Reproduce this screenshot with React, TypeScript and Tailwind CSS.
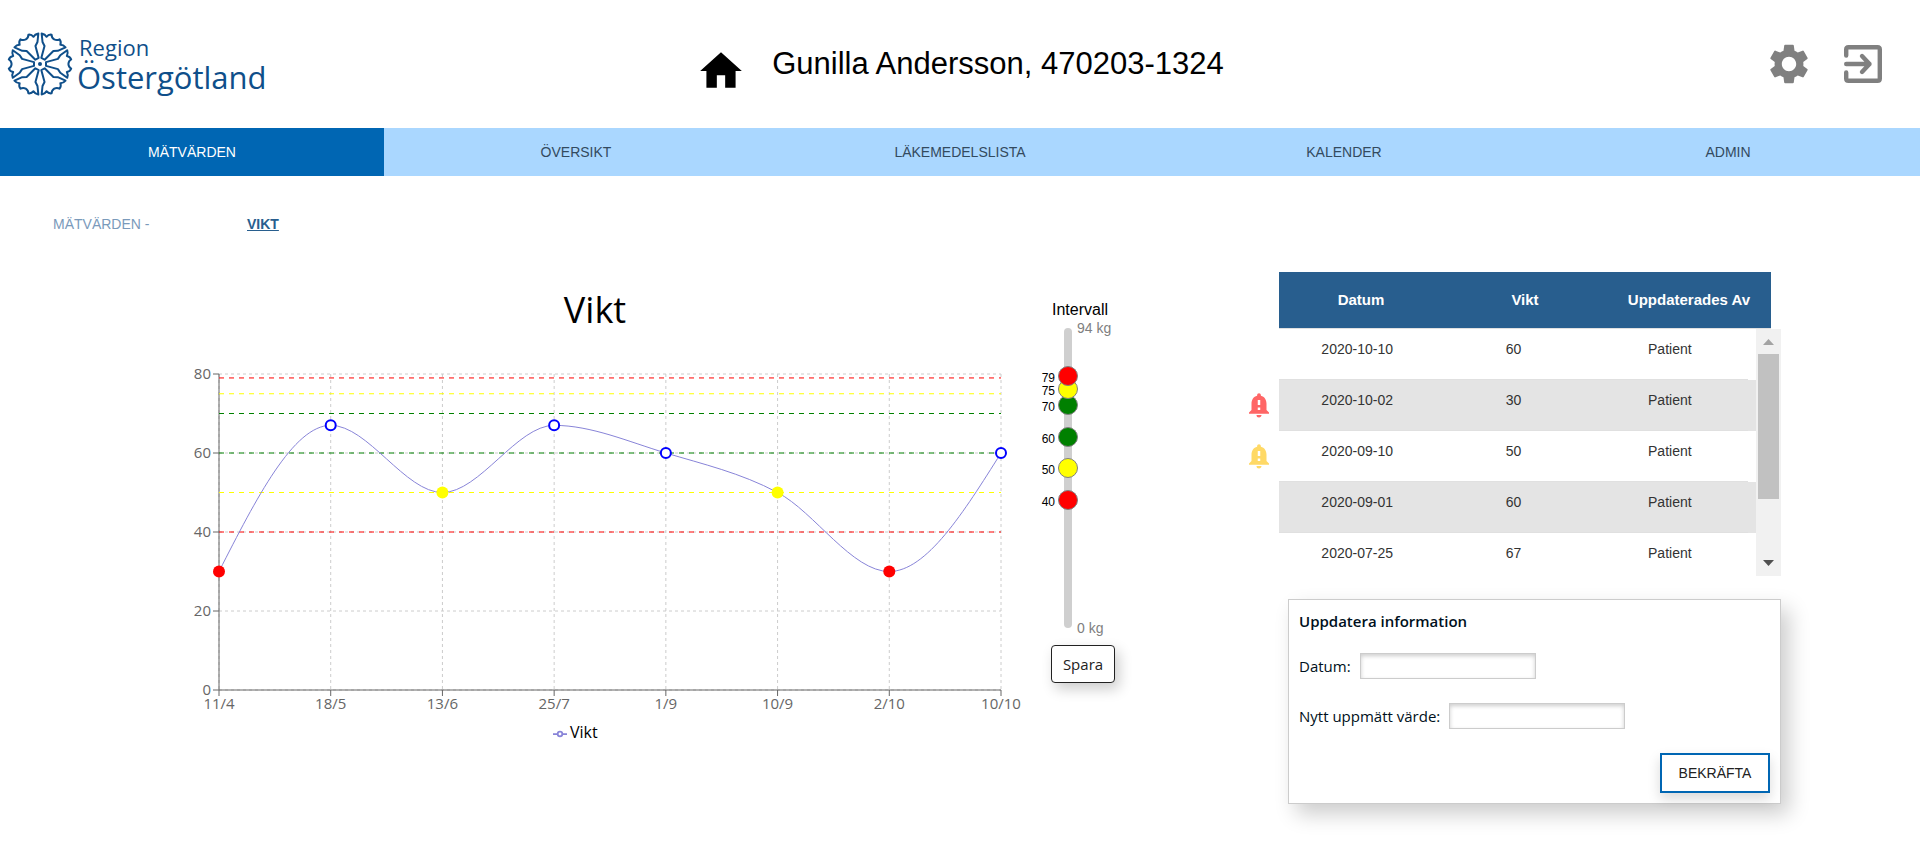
import React from "react";
import { MdHome, MdSettings, MdNotificationImportant } from "react-icons/md";

const tabs = ["MÄTVÄRDEN", "ÖVERSIKT", "LÄKEMEDELSLISTA", "KALENDER", "ADMIN"];

const measurements = [
  { day: "11/4", value: 30 },
  { day: "18/5", value: 67 },
  { day: "13/6", value: 50 },
  { day: "25/7", value: 67 },
  { day: "1/9", value: 60 },
  { day: "10/9", value: 50 },
  { day: "2/10", value: 30 },
  { day: "10/10", value: 60 },
];

const limits = [
  { value: 40, color: "red", thumb: "[&::-webkit-slider-thumb]:bg-[#ff0000]" },
  { value: 50, color: "yellow", thumb: "[&::-webkit-slider-thumb]:bg-[#ffff00]" },
  { value: 60, color: "green", thumb: "[&::-webkit-slider-thumb]:bg-[#008000]" },
  { value: 70, color: "green", thumb: "[&::-webkit-slider-thumb]:bg-[#008000]" },
  { value: 75, color: "yellow", thumb: "[&::-webkit-slider-thumb]:bg-[#ffff00]" },
  { value: 79, color: "red", thumb: "[&::-webkit-slider-thumb]:bg-[#ff0000]" },
];

const rows = [
  { date: "2020-10-10", value: 60, by: "Patient", alert: "" },
  { date: "2020-10-02", value: 30, by: "Patient", alert: "text-[#ff6666]" },
  { date: "2020-09-10", value: 50, by: "Patient", alert: "text-[#ffd966]" },
  { date: "2020-09-01", value: 60, by: "Patient", alert: "" },
  { date: "2020-07-25", value: 67, by: "Patient", alert: "" },
];

const LEFT = 219;
const RIGHT = 1001;
const TOP = 24;
const BOTTOM = 340;
const step = (RIGHT - LEFT) / (measurements.length - 1);
const px = (i: number) => LEFT + i * step;
const py = (v: number) => BOTTOM - (v / 80) * (BOTTOM - TOP);

/** Monotone cubic interpolation through the measured points. */
function curve(points: [number, number][]) {
  const n = points.length;
  const slope = (i: number) =>
    (points[i + 1][1] - points[i][1]) / (points[i + 1][0] - points[i][0]);
  const m: number[] = new Array(n).fill(0);
  for (let i = 1; i < n - 1; i++) {
    const a = slope(i - 1);
    const b = slope(i);
    m[i] = (Math.sign(a) + Math.sign(b)) * Math.min(Math.abs(a), Math.abs(b), Math.abs(a + b) / 4);
  }
  m[0] = (3 * slope(0) - m[1]) / 2;
  m[n - 1] = (3 * slope(n - 2) - m[n - 2]) / 2;
  let d = `M${points[0][0]},${points[0][1]}`;
  for (let i = 0; i < n - 1; i++) {
    const [x0, y0] = points[i];
    const [x1, y1] = points[i + 1];
    const h = (x1 - x0) / 3;
    d += `C${x0 + h},${y0 + m[i] * h},${x1 - h},${y1 - m[i + 1] * h},${x1},${y1}`;
  }
  return d;
}

function Flower() {
  const petal =
    "M6 1.9L17.9 5.1L20.3 8.8L27.2 13.8Q28.4 10.500 26.8 8Q30 7.500 31.2 4.6Q28.6 3.200 28.4 0Q28.6 -3.200 31.2 -4.6Q30 -7.500 26.8 -8Q28.4 -10.500 27.2 -13.8L20.3 -8.8L17.9 -5.1L6 -1.9Z";
  return (
    <svg viewBox="-33 -33 66 66" className="h-[66px] w-[66px]" aria-hidden="true">
      {[0, 60, 120, 180, 240, 300].map((a) => (
        <path
          key={a}
          d={petal}
          transform={`rotate(${a})`}
          fill="none"
          stroke="#0f4f8a"
          strokeWidth="2"
          strokeLinejoin="round"
        />
      ))}
      <circle r="2" fill="#0f4f8a" />
    </svg>
  );
}

function ExitIcon() {
  return (
    <svg viewBox="0 0 38 38" className="h-[38px] w-[38px]" fill="none" stroke="#808080" strokeWidth="4.4" strokeLinecap="round" strokeLinejoin="round">
      <path d="M2.200 10.5V4.5Q2.200 2.200 4.500 2.200H33.500Q35.800 2.200 35.800 4.500V33.500Q35.800 35.800 33.500 35.800H4.500Q2.200 35.800 2.200 33.500V27.500" />
      <path d="M2.200 19H25.500M18 11L25.500 19L18 27" />
    </svg>
  );
}

function Chart() {
  const points = measurements.map((p, i) => [px(i), py(p.value)] as [number, number]);
  return (
    <svg viewBox="0 0 1040 410" className="w-full font-['Open_Sans',sans-serif]" role="img" aria-label="Vikt">
      <g stroke="#ccc" strokeDasharray="3 3">
        {[0, 20, 40, 60, 80].map((v) => (
          <line key={v} x1={LEFT} x2={RIGHT} y1={py(v)} y2={py(v)} />
        ))}
        {measurements.map((p, i) => (
          <line key={p.day} x1={px(i)} x2={px(i)} y1={TOP} y2={BOTTOM} />
        ))}
      </g>
      <g stroke="#666">
        <line x1={LEFT} x2={RIGHT} y1={BOTTOM} y2={BOTTOM} />
        <line x1={LEFT} x2={LEFT} y1={TOP} y2={BOTTOM} />
        {[0, 20, 40, 60, 80].map((v) => (
          <line key={v} x1={LEFT - 6} x2={LEFT} y1={py(v)} y2={py(v)} />
        ))}
        {measurements.map((p, i) => (
          <line key={p.day} x1={px(i)} x2={px(i)} y1={BOTTOM} y2={BOTTOM + 6} />
        ))}
      </g>
      <g fill="#666" fontSize="15">
        {[0, 20, 40, 60, 80].map((v) => (
          <text key={v} x={LEFT - 8} y={py(v) + 5} textAnchor="end">{v}</text>
        ))}
        {measurements.map((p, i) => (
          <text key={p.day} x={px(i)} y={BOTTOM + 19} textAnchor="middle">{p.day}</text>
        ))}
      </g>
      {limits.map((l) => (
        <line key={l.value} x1={LEFT} x2={RIGHT} y1={py(l.value)} y2={py(l.value)} stroke={l.color} strokeDasharray="5 5" />
      ))}
      <path d={curve(points)} fill="none" stroke="#8884d8" />
      {measurements.map((p, i) => {
        const alarm = p.value <= 40 ? "red" : p.value <= 50 ? "yellow" : "";
        return alarm ? (
          <circle key={p.day} cx={px(i)} cy={py(p.value)} r="6" fill={alarm} />
        ) : (
          <circle key={p.day} cx={px(i)} cy={py(p.value)} r="5" fill="#fff" stroke="blue" strokeWidth="2" />
        );
      })}
      <g fill="none" stroke="#8884d8" strokeWidth="1.75">
        <path d="M553 384H557.700M562.300 384H567" />
        <circle cx="560" cy="384" r="2.300" />
      </g>
      <text x="570" y="388" fontSize="16">Vikt</text>
    </svg>
  );
}

function LimitSlider() {
  return (
    <div className="relative mx-auto mt-1.5 h-[300px] w-2 rounded bg-[#cfcfcf]">
      {limits.map((l) => (
        <React.Fragment key={l.value}>
          <input
            type="range"
            min={0}
            max={94}
            defaultValue={l.value}
            aria-label={`Gräns ${l.value} kg`}
            className={`pointer-events-none absolute -left-1.5 -top-2.5 h-[320px] w-5 appearance-none bg-transparent [direction:rtl] [writing-mode:vertical-lr] [&::-webkit-slider-thumb]:pointer-events-auto [&::-webkit-slider-thumb]:h-5 [&::-webkit-slider-thumb]:w-5 [&::-webkit-slider-thumb]:appearance-none [&::-webkit-slider-thumb]:rounded-full [&::-webkit-slider-thumb]:border [&::-webkit-slider-thumb]:border-solid [&::-webkit-slider-thumb]:border-[#808080] ${l.thumb}`}
          />
          <span
            className="absolute right-[17px] translate-y-[calc(50%+2px)] text-xs leading-4 text-black"
            style={{ bottom: `${(l.value / 94) * 100}%` }}
          >
            {l.value}
          </span>
        </React.Fragment>
      ))}
      <span className="absolute left-[13px] top-0 -translate-y-1/2 whitespace-nowrap text-sm text-[#808080]">94 kg</span>
      <span className="absolute bottom-0 left-[13px] translate-y-1/2 whitespace-nowrap text-sm text-[#808080]">0 kg</span>
    </div>
  );
}

function History() {
  return (
    <div className="flex">
      <div className="w-[39px] shrink-0 pr-0.5 pt-14">
        {rows.map((r) => (
          <div key={r.date} className="flex h-[51px] items-center justify-center">
            {r.alert && <MdNotificationImportant size={30} className={r.alert} />}
          </div>
        ))}
      </div>
      <div className="w-[502px]">
        <table className="w-[492px] table-fixed bg-[#285e8e] text-[15px] font-bold text-white">
          <thead>
            <tr className="h-14 border-b border-[#e0e0e0]">
              <th scope="col">Datum</th>
              <th scope="col">Vikt</th>
              <th scope="col" className="whitespace-nowrap">Uppdaterades Av</th>
            </tr>
          </thead>
        </table>
        <div className="flex h-[247px] overflow-hidden">
          <div className="flex-1">
            <table className="w-full table-fixed text-sm text-[#333]">
              <colgroup>
                <col />
                <col />
                <col />
                <col className="w-2" />
              </colgroup>
              <tbody>
                {rows.map((r) => (
                  <tr key={r.date} className="h-[51px] text-center align-top even:bg-[#e4e4e4]">
                    <td className="border-b border-[#e0e0e0] pt-2.5">{r.date}</td>
                    <td className="border-b border-[#e0e0e0] pt-2.5">{r.value}</td>
                    <td className="border-b border-[#e0e0e0] pt-2.5">{r.by}</td>
                    <td />
                  </tr>
                ))}
              </tbody>
            </table>
          </div>
          <div className="flex w-[25px] flex-col items-center bg-[#f1f1f1]" aria-hidden="true">
            <svg viewBox="0 0 25 25" className="h-[25px] w-[25px]" fill="#a3a3a3">
              <path d="M7 16L12.500 10L18 16Z" />
            </svg>
            <div className="h-[145px] w-[21px] bg-[#c1c1c1]" />
            <svg viewBox="0 0 25 25" className="mt-auto h-[25px] w-[25px]" fill="#505050">
              <path d="M7 9L12.500 15L18 9Z" />
            </svg>
          </div>
        </div>
      </div>
    </div>
  );
}

const field = "h-[26px] w-44 border border-[#ccc] bg-white px-1 shadow-[inset_0_2px_4px_rgba(0,0,0,0.2)] outline-none";

function UpdateForm() {
  return (
    <form
      onSubmit={(e) => e.preventDefault()}
      className="ml-12 mt-4 flex w-[493px] flex-col border border-[#ccc] px-2.5 pb-2.5 pt-[9px] font-['Open_Sans',sans-serif] text-[15px] text-[#001020] shadow-[8px_10px_20px_rgba(0,0,0,0.2)]"
    >
      <h2 className="font-semibold leading-6">Uppdatera information</h2>
      <div className="mt-5 flex items-center gap-[9px]">
        <label htmlFor="datum">Datum:</label>
        <input id="datum" type="text" className={field} />
      </div>
      <div className="mt-6 flex items-center gap-[9px]">
        <label htmlFor="varde">Nytt uppmätt värde:</label>
        <input id="varde" type="text" className={field} />
      </div>
      <button
        type="submit"
        className="mt-6 h-10 w-[110px] self-end border-2 border-[#0066b3] bg-white font-['Liberation_Sans',Arial,sans-serif] text-sm text-[#222] shadow-[0_6px_12px_rgba(0,0,0,0.15)]"
      >
        BEKRÄFTA
      </button>
    </form>
  );
}

export default function App() {
  return (
    <div className="min-h-screen bg-white font-['Liberation_Sans',Arial,sans-serif] text-black">
      <header className="grid h-32 grid-cols-[1fr_auto_1fr] items-center">
        <a href="#start" className="flex items-center pl-[7px] text-[#0f4f8a]">
          <Flower />
          <span className="flex flex-col pl-1 pt-0.5 font-['Open_Sans',sans-serif] font-medium">
            <span className="pl-0.5 text-[22px] leading-6">Region</span>
            <span className="text-[31px] leading-9">Östergötland</span>
          </span>
        </a>
        <div className="flex items-center gap-[26px]">
          <a href="#hem" aria-label="Hem" className="pt-3.5">
            <MdHome size={50} />
          </a>
          <h1 className="text-[31px]">Gunilla Andersson, 470203-1324</h1>
        </div>
        <div className="flex items-center justify-end gap-[31px] pr-[38px]">
          <button type="button" aria-label="Inställningar">
            <MdSettings size={48} color="#808080" />
          </button>
          <button type="button" aria-label="Logga ut">
            <ExitIcon />
          </button>
        </div>
      </header>

      <nav className="grid h-12 grid-cols-5 text-sm">
        {tabs.map((t, i) => (
          <a
            key={t}
            href="#flik"
            className={
              i === 0
                ? "flex items-center justify-center bg-[#0066b3] text-white"
                : "flex items-center justify-center bg-[#aad7ff] text-[#334a5e]"
            }
          >
            {t}
          </a>
        ))}
      </nav>

      <div className="flex pl-[53px] pt-[38px] text-sm">
        <a href="#matvarden" className="w-[194px] text-[#7a9abb]">MÄTVÄRDEN -</a>
        <a href="#vikt" className="font-bold text-[#285e8e] underline">VIKT</a>
      </div>

      <main className="grid grid-cols-[1040fr_200fr_680fr] pt-[38px]">
        <section className="pt-3.5">
          <h2 className="pl-[150px] text-center font-['Open_Sans',sans-serif] text-4xl leading-[48px]">Vikt</h2>
          <div className="mt-4">
            <Chart />
          </div>
        </section>
        <section className="flex flex-col pt-[26px]">
          <div className="flex w-20 flex-col items-center">
            <h3 className="whitespace-nowrap leading-6">Intervall</h3>
          </div>
          <div className="w-14">
            <LimitSlider />
          </div>
          <button
            type="button"
            className="ml-[11px] mt-[17px] h-[38px] w-16 rounded border border-[#222] bg-white font-['Open_Sans',sans-serif] text-[15px] text-[#222] shadow-[4px_6px_14px_rgba(0,0,0,0.2)]"
          >
            Spara
          </button>
        </section>
        <section>
          <History />
          <UpdateForm />
        </section>
      </main>
    </div>
  );
}
